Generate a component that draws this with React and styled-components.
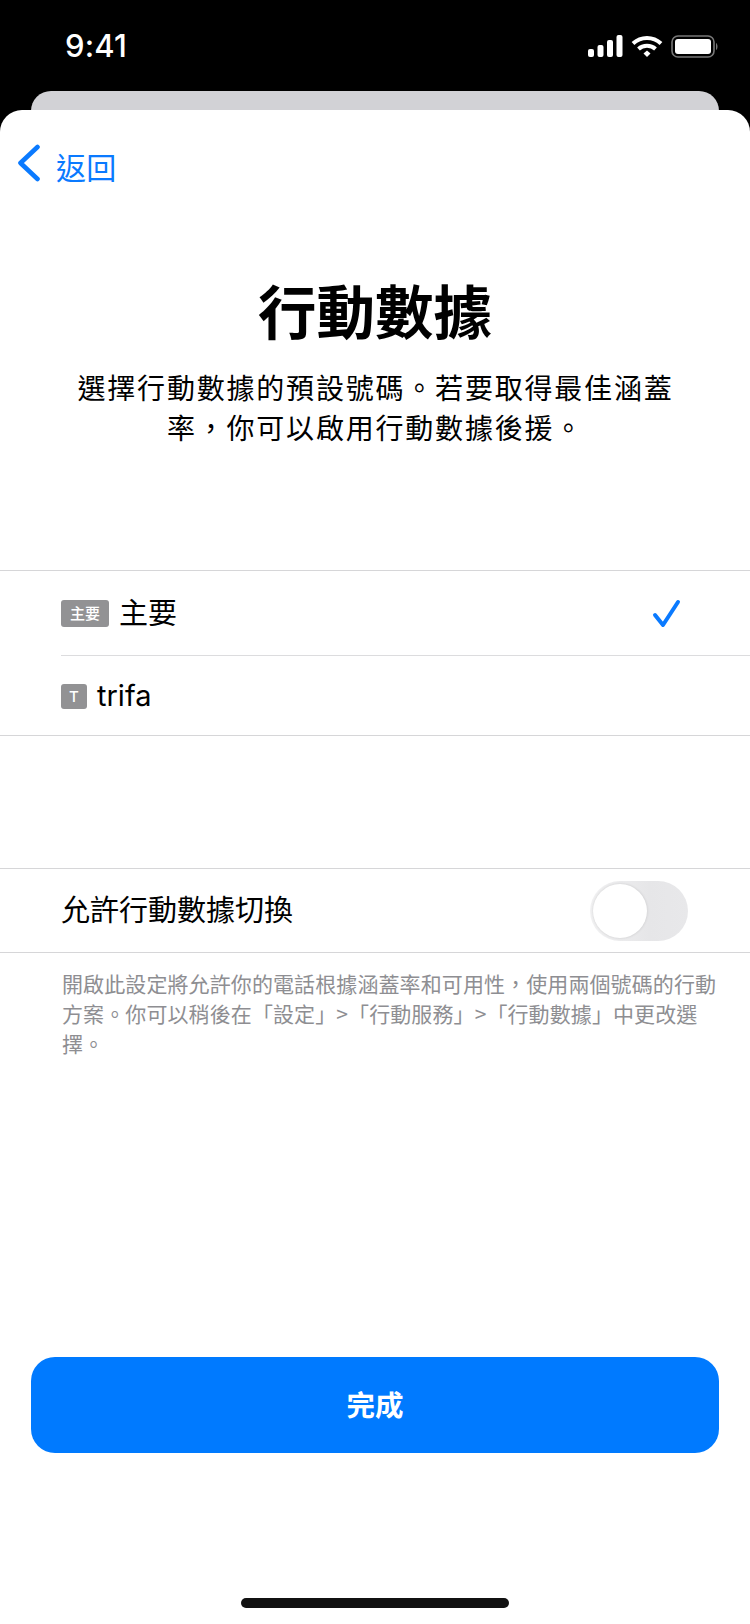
import React from "react";
import styled, { createGlobalStyle } from "styled-components";

const CJK = `"Noto Sans CJK TC", "Noto Sans CJK SC", sans-serif`;
const Global = createGlobalStyle`
  html, body { margin: 0; padding: 0; background: #000; }
  body { font-family: Inter, ${CJK}; }
  * { box-sizing: border-box; }
`;

const Page = styled.div`
  width: 750px; height: 1624px; display: flex; flex-direction: column; background: #000; overflow: hidden;
`;
const StatusBar = styled.div`
  height: 91px; flex: none; display: flex; align-items: flex-start; justify-content: space-between;
  padding: 25px 31px 0 65px; color: #fff;
`;
const Time = styled.div`
  font: 500 31px/42px Inter, sans-serif; letter-spacing: 0.2px;
`;
const StatusIcons = styled.div`
  display: flex; align-items: center; gap: 8px; height: 42px; margin-top: 0;
`;
const BackCard = styled.div`
  height: 39px; margin: 0 31px -20px; background: #d2d2d6; border-radius: 20px 20px 0 0; flex: none;
`;
const Sheet = styled.div`
  position: relative; flex: 1; background: #fff; border-radius: 22px 22px 0 0; display: flex; flex-direction: column;
`;
const NavBar = styled.div`
  height: 159px; flex: none; display: flex; align-items: flex-start; padding: 34px 0 0 17px; color: #0a7aff;
`;
const BackLabel = styled.span`
  font: 400 30px/40px ${CJK}; margin: 2px 0 0 15px; letter-spacing: 0.2px;
`;
const Title = styled.h1`
  margin: 0; font: 700 58.5px/80px ${CJK}; text-align: center; color: #000; height: 70px;
`;
const Subtitle = styled.p`
  margin: 0 auto; padding: 28px 0 0 1px; width: 620px; font: 400 28px/40px ${CJK}; letter-spacing: 1.8px; text-align: center; color: #000;
`;
const Group = styled.div`
  border-top: 1px solid #d6d6d8; border-bottom: 1px solid #d6d6d8; margin-top: ${p => p.$top}px;
`;
const Row = styled.div`
  height: ${p => p.$h}px; margin-left: 61px; padding-top: 1px; display: flex; align-items: center; color: #000;
  font: 400 29px/40px Inter, ${CJK};
  ${p => p.$divider && "border-bottom: 1px solid #dcdcde;"}
`;
const Badge = styled.span`
  flex: none; width: ${p => p.$w}px; height: ${p => p.$hh}px; margin-right: ${p => p.$gap}px; background: #929294; color: #fff;
  border-radius: 3px; display: flex; align-items: center; justify-content: center;
  font: 500 ${p => p.$fs}px/1 Inter, ${CJK};
`;
const Check = styled.svg`
  position: absolute; left: 652px; top: 489px;
`;
const Switch = styled.div`
  position: relative; margin-left: auto; margin-right: 62px; width: 98px; height: 60px; border-radius: 30px; background: linear-gradient(90deg, #f2f2f3, #e6e6e8 60%, #e8e8ea);
`;
const Thumb = styled.div`
  position: absolute; left: 3px; top: 3px; width: 54px; height: 54px; border-radius: 50%; background: #fff; box-shadow: 0 0 3px rgba(0,0,0,.14);
`;
const Footnote = styled.p`
  margin: 0; padding: 15px 24px 0 62px; font: 400 21px/30px ${CJK}; letter-spacing: 0.1px; color: #8e8e92;
`;
const Spacer = styled.div`flex: 1;`;
const Done = styled.button`
  flex: none; margin: 0 31px; height: 96px; border: 0; border-radius: 24px; background: #007aff; color: #fff; padding-bottom: 3px;
  font: 700 28.5px/1 ${CJK};
`;
const HomeBar = styled.div`
  flex: none; width: 268px; height: 10px; border-radius: 5px; background: #111; margin: 145px auto 16px;
`;

const Signal = () => (
  <svg width="35" height="22" viewBox="0 0 35 22" fill="#fff">
    <rect x="0" y="14" width="6" height="8" rx="2" />
    <rect x="9.5" y="10" width="6" height="12" rx="2" />
    <rect x="19" y="5" width="6" height="17" rx="2" />
    <rect x="28.5" y="0" width="6" height="22" rx="2" />
  </svg>
);
const Wifi = () => (
  <svg width="32" height="23" viewBox="0 0 32 23" fill="none" stroke="#fff" strokeWidth="4">
    <path d="M2 8.5 C10 1 22 1 30 8.5" />
    <path d="M7.5 14 C12 9.8 20 9.8 24.5 14" />
    <path d="M12.5 18.6 L16 15.5 L19.5 18.6 L16 22 Z" fill="#fff" stroke="none" />
  </svg>
);
const Battery = () => (
  <svg width="48" height="23" viewBox="0 0 48 23">
    <rect x="1" y="1" width="42" height="21" rx="6" fill="none" stroke="#777" strokeWidth="1.6" />
    <rect x="4" y="4" width="36" height="15" rx="3" fill="#fff" />
    <path d="M45 8 C47 9 47 14 45 15 Z" fill="#777" />
  </svg>
);

export default function App() {
  return (
    <Page>
      <Global />
      <StatusBar>
        <Time>9:41</Time>
        <StatusIcons>
          <Signal />
          <Wifi />
          <Battery />
        </StatusIcons>
      </StatusBar>
      <BackCard />
      <Sheet>
        <NavBar>
          <svg width="24" height="38" viewBox="0 0 24 38" fill="none" stroke="#0a7aff" strokeWidth="4.6" strokeLinecap="round" strokeLinejoin="round">
            <path d="M20.5 3 L3.5 19 L20.5 35" />
          </svg>
          <BackLabel>返回</BackLabel>
        </NavBar>
        <Title>行動數據</Title>
        <Subtitle>選擇行動數據的預設號碼。若要取得最佳涵蓋率，你可以啟用行動數據後援。</Subtitle>
        <Group $top={123}>
          <Row $h={85} $divider>
            <Badge $w={48} $hh={27} $gap={10} $fs={15}>主要</Badge>
            主要
          </Row>
          <Row $h={79}>
            <Badge $w={26} $hh={25} $gap={10} $fs={15}>T</Badge>
            trifa
          </Row>
        </Group>
        <Check width="30" height="30" viewBox="0 0 30 30" fill="none" stroke="#0a7aff" strokeWidth="4" strokeLinecap="round" strokeLinejoin="round">
          <path d="M3 16 L11 26 L26 3" />
        </Check>
        <Group $top={132}>
          <Row $h={83}>
            允許行動數據切換
            <Switch><Thumb /></Switch>
          </Row>
        </Group>
        <Footnote>開啟此設定將允許你的電話根據涵蓋率和可用性，使用兩個號碼的行動方案。你可以稍後在「設定」&gt;「行動服務」&gt;「行動數據」中更改選擇。</Footnote>
        <Spacer />
        <Done>完成</Done>
        <HomeBar />
      </Sheet>
    </Page>
  );
}
